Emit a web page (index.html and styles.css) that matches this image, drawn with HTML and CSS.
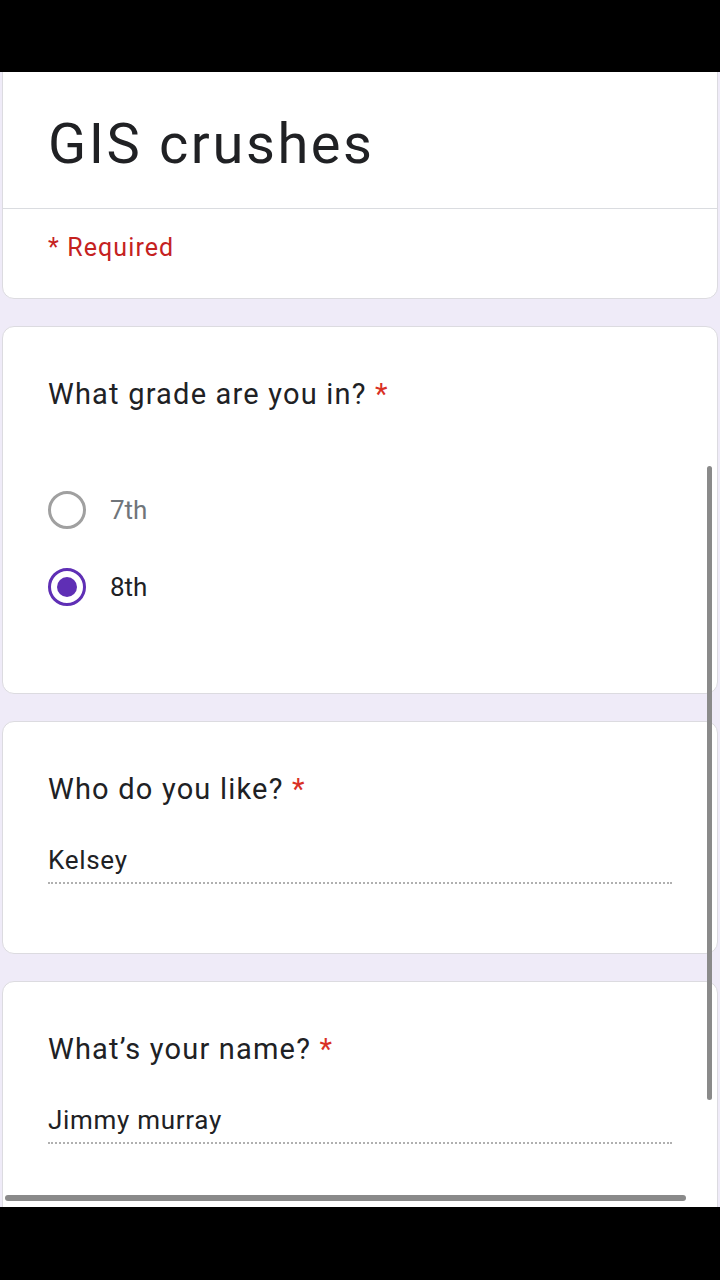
FILE: index.html
```html
<!DOCTYPE html>
<html lang="en">
<head>
  <meta charset="UTF-8" />
  <meta name="viewport" content="width=device-width, initial-scale=1.0" />
  <title>GIS crushes</title>
  <link rel="stylesheet" href="styles.css">
</head>
<body>
  <div class="status-bar"></div>

  <main class="screen">
    <section class="card header-card">
      <div class="title-area">
        <h1>GIS crushes</h1>
      </div>
      <div class="required-note">* Required</div>
    </section>

    <section class="card question-card grade-card">
      <h2 class="question">What grade are you in? <span class="star">*</span></h2>
      <div class="options">
        <label class="option">
          <span class="radio"></span>
          <span class="option-label muted">7th</span>
        </label>
        <label class="option">
          <span class="radio checked"></span>
          <span class="option-label">8th</span>
        </label>
      </div>
    </section>

    <section class="card question-card text-card">
      <h2 class="question">Who do you like? <span class="star">*</span></h2>
      <div class="answer">Kelsey</div>
    </section>

    <section class="card question-card text-card last-card">
      <h2 class="question">What’s your name? <span class="star">*</span></h2>
      <div class="answer">Jimmy murray</div>
    </section>

    <!-- Scrollbars vom Screenshot -->
    <div class="scroll-v"></div>
    <div class="scroll-h"></div>
  </main>

  <div class="nav-bar"></div>
</body>
</html>
```

FILE: styles.css
```css
body {
  margin: 0;
  background-color: #000;
  font-family: Roboto, 'Liberation Sans', sans-serif;
  color: #202124;
}

.status-bar {
  height: 72px;
  background-color: #000;
}

.nav-bar {
  height: 73px;
  background-color: #000;
}

.screen {
  position: relative;
  height: 1135px;
  overflow: hidden;
  background-color: #efebf8;
  display: flex;
  flex-direction: column;
  gap: 27px;
}

.card {
  background-color: #fff;
  margin: 0 2px;
  border: 1px solid #dcdbe0;
  border-radius: 12px;
  box-sizing: border-box;
  flex-shrink: 0;
}

/* Kopfkarte, oben abgeschnitten */
.header-card {
  margin-top: -20px;
  border-top-left-radius: 0;
  border-top-right-radius: 0;
}

.title-area {
  height: 155px;
  border-bottom: 1px solid #dadce0;
  padding: 0 45px;
  display: flex;
  align-items: flex-end;
}

.title-area h1 {
  margin: 0 0 36px;
  font-size: 56px;
  font-weight: 400;
  letter-spacing: 2.6px;
  line-height: 56px;
  color: #202124;
}

.required-note {
  height: 89px;
  padding: 24px 45px 0;
  box-sizing: border-box;
  font-size: 25px;
  letter-spacing: 1.1px;
  color: #c5221f;
}

.question-card {
  padding: 47px 45px 0;
}

.grade-card {
  height: 368px;
}

.text-card {
  height: 233px;
}

.last-card {
  height: 260px;
}

.question {
  margin: 0;
  font-size: 29px;
  font-weight: 400;
  letter-spacing: 1.2px;
  line-height: 40px;
  color: #202124;
}

.star {
  color: #d93025;
}

.options {
  margin-top: 77px;
  display: flex;
  flex-direction: column;
  gap: 39px;
}

.option {
  display: flex;
  align-items: center;
  gap: 24px;
  height: 38px;
}

.radio {
  width: 38px;
  height: 38px;
  border: 3px solid #a0a0a0;
  border-radius: 50%;
  box-sizing: border-box;
  position: relative;
}

.radio.checked {
  border-color: #5f2fb5;
}

.radio.checked::after {
  content: "";
  position: absolute;
  top: 6px;
  left: 6px;
  width: 20px;
  height: 20px;
  border-radius: 50%;
  background-color: #5f2fb5;
}

.option-label {
  font-size: 26px;
  color: #202124;
}

.option-label.muted {
  color: #70757a;
}

.answer {
  margin-top: 33px;
  width: 624px;
  font-size: 26px;
  letter-spacing: 0.7px;
  line-height: 36px;
  padding-bottom: 4px;
  border-bottom: 2px dotted #b0b0b0;
  color: #202124;
}

.scroll-v {
  position: absolute;
  top: 394px;
  left: 707px;
  width: 5px;
  height: 634px;
  border-radius: 3px;
  background-color: #8a8a8a;
}

.scroll-h {
  position: absolute;
  top: 1123px;
  left: 5px;
  width: 681px;
  height: 6px;
  border-radius: 3px;
  background-color: #8a8a8a;
}
```
